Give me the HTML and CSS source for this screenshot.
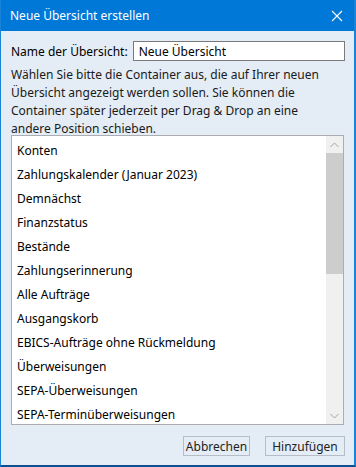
FILE: index.html
```html
<!DOCTYPE html>
<html lang="de">
<head>
  <meta charset="UTF-8" />
  <title>Neue Übersicht erstellen</title>
  <link rel="stylesheet" href="styles.css">
</head>
<body>
  <div class="window">
    <div class="titlebar">
      <span class="title">Neue Übersicht erstellen</span>
      <svg class="close" width="12" height="12" viewBox="0 0 12 12">
        <path d="M1 1L11 11M11 1L1 11" stroke="#fff" stroke-width="1.1" fill="none" />
      </svg>
    </div>
    <div class="content">
      <div class="name-row">
        <label for="name">Name der Übersicht:</label>
        <input id="name" type="text" value="Neue Übersicht" />
      </div>
      <p class="hint">Wählen Sie bitte die Container aus, die auf Ihrer neuen Übersicht angezeigt werden sollen. Sie können die Container später jederzeit per Drag &amp; Drop an eine andere Position schieben.</p>
      <div class="listbox">
        <ul class="items">
          <li>Konten</li>
          <li>Zahlungskalender (Januar 2023)</li>
          <li>Demnächst</li>
          <li>Finanzstatus</li>
          <li>Bestände</li>
          <li>Zahlungserinnerung</li>
          <li>Alle Aufträge</li>
          <li>Ausgangskorb</li>
          <li>EBICS-Aufträge ohne Rückmeldung</li>
          <li>Überweisungen</li>
          <li>SEPA-Überweisungen</li>
          <li>SEPA-Terminüberweisungen</li>
        </ul>
        <div class="scrollbar">
          <div class="arrow">
            <svg width="9" height="6" viewBox="0 0 9 6"><path d="M0.5 5L4.5 1L8.5 5" stroke="#a3a3a3" fill="none" /></svg>
          </div>
          <div class="track">
            <div class="thumb"></div>
          </div>
          <div class="arrow">
            <svg width="9" height="6" viewBox="0 0 9 6"><path d="M0.5 1L4.5 5L8.5 1" stroke="#a3a3a3" fill="none" /></svg>
          </div>
        </div>
      </div>
      <div class="buttons">
        <button class="btn btn-cancel">Abbrechen</button>
        <button class="btn btn-add">Hinzufügen</button>
      </div>
    </div>
  </div>
</body>
</html>
```

FILE: styles.css
```css
* {
  box-sizing: border-box;
}
body {
  margin: 0;
  font-family: 'Segoe UI', 'Noto Sans', 'Open Sans', sans-serif;
  font-size: 12px;
  color: #000;
}
.window {
  width: 356px;
  height: 467px;
  display: flex;
  flex-direction: column;
  background: #e4ecf5;
  border-left: 1px solid #1883d7;
  border-right: 2px solid #1883d7;
  border-bottom: 2px solid #0f4f8f;
}
.titlebar {
  height: 31px;
  flex-shrink: 0;
  background: #0078d7;
  color: #fff;
  display: flex;
  align-items: center;
  justify-content: space-between;
  padding: 0 11px 0 9px;
}
.title {
  font-size: 12px;
}
.close {
  display: block;
}
.content {
  flex-grow: 1;
  display: flex;
  flex-direction: column;
  padding: 10px 9px 0 10px;
}
.name-row {
  display: flex;
  align-items: center;
  gap: 5px;
}
.name-row label {
  white-space: nowrap;
}
.name-row input {
  flex-grow: 1;
  height: 20px;
  border: 1px solid #7a7a7a;
  background: #fff;
  font: inherit;
  padding: 0 5px;
  outline: none;
}
.hint {
  margin: 5px 0 0;
  width: 318px;
  line-height: 18px;
  color: #1a1a1a;
}
.listbox {
  margin-top: -3px;
  height: 290px;
  margin-right: 1px;
  display: flex;
  border: 1px solid #abadb3;
  background: #fff;
  overflow: hidden;
}
.items {
  list-style: none;
  margin: 0;
  padding: 3px 0 0 5px;
  flex-grow: 1;
}
.items li {
  height: 24px;
  line-height: 24px;
  white-space: nowrap;
}
.scrollbar {
  width: 17px;
  flex-shrink: 0;
  display: flex;
  flex-direction: column;
  background: #f0f0f0;
}
.arrow {
  height: 17px;
  display: flex;
  align-items: center;
  justify-content: center;
}
.track {
  flex-grow: 1;
}
.thumb {
  height: 121px;
  background: #cdcdcd;
}
.buttons {
  display: flex;
  justify-content: flex-end;
  gap: 15px;
  margin-top: 11px;
}
.btn {
  height: 20px;
  padding: 0;
  border: 1px solid #b4bdc8;
  background: #e4ecf5;
  font: inherit;
  color: #222;
}
.btn-cancel {
  width: 67px;
}
.btn-add {
  width: 80px;
}
```
